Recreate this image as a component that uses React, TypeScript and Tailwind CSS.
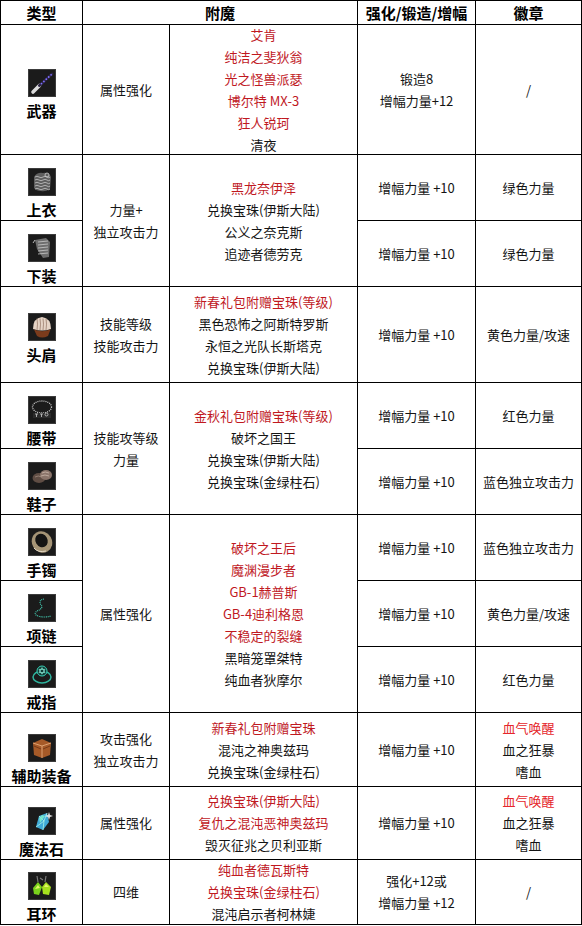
import React from "react";

type Line = { t: string; c?: "red" | "hot" };

const r = (t: string): Line => ({ t, c: "red" });
const k = (t: string): Line => ({ t });

function Frame({ children }: { children: React.ReactNode }) {
  return (
    <svg width="28" height="28" viewBox="0 0 28 28">
      <rect x="0.5" y="0.5" width="27" height="27" fill="#1b1b1b" stroke="#3c3c3c" />
      {children}
    </svg>
  );
}

const icons: Record<string, React.ReactNode> = {
  weapon: (
    <Frame>
      <path d="M5 23 L11.5 16.5" stroke="#dcdcdc" strokeWidth="3.6" strokeLinecap="round" />
      <path d="M11.5 16.5 L24 5" stroke="#2c2444" strokeWidth="3" strokeLinecap="round" />
      {[0, 1, 2, 3, 4].map((i) => (
        <circle key={i} cx={13.5 + i * 2.4} cy={14.6 - i * 2.2} r="0.9" fill="#7d70ff" />
      ))}
    </Frame>
  ),
  top: (
    <Frame>
      <path d="M6 9 Q9 4 15 5 Q21 4 23 9 L22 21 Q17 24 13 23 Q8 23 6 20 Z" fill="#5e5e5e" />
      {[9, 12, 15, 18, 21].map((y) => (
        <path key={y} d={`M7 ${y} q2 -1.5 4 0 t4 0 t4 0 t3 0`} stroke="#c4c4c4" strokeWidth="0.8" fill="none" />
      ))}
      <circle cx="19" cy="7" r="2" fill="none" stroke="#cfcfcf" strokeWidth="0.8" />
    </Frame>
  ),
  bottom: (
    <Frame>
      <path d="M7 6 L18 4 L22 8 L21 23 L15 24 L9 15 Z" fill="#6e6e6e" />
      {[8, 11, 14, 17, 20].map((y) => (
        <path key={y} d={`M10 ${y} L20 ${y - 1}`} stroke="#c9c9c9" strokeWidth="0.8" />
      ))}
      <path d="M7 6 L5 9" stroke="#bbbbbb" strokeWidth="1" />
    </Frame>
  ),
  shoulder: (
    <Frame>
      <path d="M5 16 Q5 5 14 4 Q23 5 23 16 Q14 19 5 16 Z" fill="#e6d4c6" />
      {[9, 12, 15, 18].map((x) => (
        <path key={x} d={`M${x} 5.5 Q${x + 1} 11 ${x} 17`} stroke="#9b7c6c" strokeWidth="0.8" fill="none" />
      ))}
      <path d="M6 16.5 Q14 20 22.5 16.5 L20 23 Q14 26 9 23 Z" fill="#7b3b1c" />
    </Frame>
  ),
  belt: (
    <Frame>
      <ellipse cx="14" cy="11" rx="9.5" ry="6" fill="none" stroke="#c8c8c8" strokeWidth="1.3" strokeDasharray="1 1" />
      <rect x="5" y="17" width="18" height="5" fill="#2b2b2b" />
      <path d="M7 18 h3 M8.5 18 v3 M12 18 h3 M13.5 18 v3 M17 18.5 a1.5 1.5 0 1 0 3 0 a1.5 1.5 0 1 0 -3 0" stroke="#bdbdbd" strokeWidth="0.9" fill="none" />
    </Frame>
  ),
  shoes: (
    <Frame>
      <ellipse cx="11" cy="16" rx="6.5" ry="5" fill="#5f4d44" />
      <ellipse cx="18" cy="13" rx="6" ry="5" fill="#8a746a" />
      <path d="M14 11 q3 -2 7 0 M13 14 q4 -2 8 0" stroke="#c9b6aa" strokeWidth="0.8" fill="none" />
      <path d="M7 15 q3 -2 7 0" stroke="#a08a7e" strokeWidth="0.8" fill="none" />
    </Frame>
  ),
  bracelet: (
    <Frame>
      <ellipse cx="14" cy="14" rx="10" ry="11" fill="#a59476" transform="rotate(-30 14 14)" />
      <ellipse cx="13.5" cy="12.5" rx="6" ry="7" fill="#141414" transform="rotate(-30 13.5 12.5)" />
      <path d="M6 20 Q10 25 18 23" stroke="#e2d8c4" strokeWidth="1" fill="none" />
    </Frame>
  ),
  necklace: (
    <Frame>
      <path d="M16 5 Q10 6 13 11 Q16 14 9 17 Q5 20 10 22 Q16 24 23 22" stroke="#42c7ae" strokeWidth="1.2" strokeDasharray="1 0.8" fill="none" />
    </Frame>
  ),
  ring: (
    <Frame>
      <ellipse cx="14" cy="17" rx="9" ry="6" fill="none" stroke="#2fb59f" strokeWidth="1.5" />
      <circle cx="14" cy="11" r="5" fill="#0f3a34" stroke="#3ad0b6" strokeWidth="1" />
      <path d="M14 7.6 L17 12.6 L11 12.6 Z M14 14.2 L11 9.4 L17 9.4 Z" fill="none" stroke="#8ef0dc" strokeWidth="0.7" />
    </Frame>
  ),
  aux: (
    <Frame>
      <path d="M5 9 L14 5 L23 9 L22 21 L14 24 L6 21 Z" fill="#a65a28" />
      <path d="M5 9 L14 12 L23 9 M14 12 L14 24" stroke="#e2a878" strokeWidth="0.9" fill="none" />
      <path d="M6 12 L13 15 M15 15 L22 12" stroke="#6b3214" strokeWidth="0.8" />
    </Frame>
  ),
  stone: (
    <Frame>
      <path d="M8 20 L11 9 L19 6 L21 15 L15 23 Z" fill="#3fa9d6" />
      <path d="M11 9 L16 14 L19 6 M16 14 L15 23 M16 14 L8 20" stroke="#a9f2e6" strokeWidth="0.8" fill="none" />
      <path d="M11 11 L14 8 L17 9 L12 16 Z" fill="#7ff0c8" opacity="0.8" />
      <path d="M21 5 L22 8 L25 9 L22 10 L21 13 L20 10 L17 9 L20 8 Z" fill="#ffffff" opacity="0.85" />
    </Frame>
  ),
  earring: (
    <Frame>
      <path d="M9 4 L10 10 M18 4 L17 10 M12 6 L15 8" stroke="#7a7a7a" strokeWidth="1.2" />
      <path d="M5 16 L10 10 L14 15 L11 23 L6 22 Z" fill="#7ad21c" />
      <path d="M14 15 L18 10 L23 15 L21 23 L15 22 Z" fill="#a6e01e" />
      <path d="M7 17 L10 13 L12 16 Z M16 15 L18 12 L21 15 Z" fill="#e4f56a" />
    </Frame>
  ),
};

const base = "border-r border-b border-black flex flex-col items-center text-center";

function Head({ children, className = "" }: { children: React.ReactNode; className?: string }) {
  return (
    <div className={`${base} justify-center text-[15px] leading-[20px] font-bold text-black ${className}`}>
      {children}
    </div>
  );
}

function Slot({ name, icon, pb = "pb-[1px]" }: { name: string; icon: string; pb?: string }) {
  return (
    <div className={`${base} justify-end ${pb}`}>
      <div className="h-[28px] w-[28px]">{icons[icon]}</div>
      <div className="mt-[5px] text-[15px] leading-[18px] font-bold text-black whitespace-nowrap">{name}</div>
    </div>
  );
}

function Text({ lines, className = "" }: { lines: Line[]; className?: string }) {
  return (
    <div className={`${base} justify-center text-[13px] leading-[22px] ${className}`}>
      {lines.map((l, i) => (
        <div
          key={i}
          className={
            l.c === "red" ? "text-[#c0191f]" : l.c === "hot" ? "text-[#e5262b]" : "text-[#141414]"
          }
        >
          {l.t}
        </div>
      ))}
    </div>
  );
}

const plus10 = [k("增幅力量 +10")];
const blood = [{ t: "血气唤醒", c: "hot" as const }, k("血之狂暴"), k("嗜血")];

export default function App() {
  return (
    <div className="w-[582px] bg-white font-['Noto_Sans_CJK_SC','Liberation_Sans',sans-serif]">
      <div className="grid grid-cols-[82px_87px_188px_118px_106px] grid-rows-[24px_130px_66px_66px_96px_66px_66px_66px_66px_66px_74px_73px_65px] border-l border-t border-black">
        {/* header */}
        <Head>类型</Head>
        <Head className="col-span-2">附魔</Head>
        <Head>强化/锻造/增幅</Head>
        <Head>徽章</Head>

        {/* 武器 */}
        <Slot name="武器" icon="weapon" pb="pb-[34px]" />
        <Text lines={[k("属性强化")]} />
        <Text
          lines={[r("艾肯"), r("纯洁之斐狄翁"), r("光之怪兽派瑟"), r("博尔特 MX-3"), r("狂人锐珂"), k("清夜")]}
        />
        <Text lines={[k("锻造8"), k("增幅力量+12")]} className="leading-[21px]" />
        <Text lines={[k("/")]} />

        {/* 上衣 / 下装 */}
        <Slot name="上衣" icon="top" />
        <Text lines={[k("力量+"), k("独立攻击力")]} className="row-span-2" />
        <Text
          lines={[r("黑龙奈伊泽"), k("兑换宝珠(伊斯大陆)"), k("公义之奈克斯"), k("追迹者德劳克")]}
          className="row-span-2"
        />
        <Text lines={plus10} />
        <Text lines={[k("绿色力量")]} />
        <Slot name="下装" icon="bottom" />
        <Text lines={plus10} />
        <Text lines={[k("绿色力量")]} />

        {/* 头肩 */}
        <Slot name="头肩" icon="shoulder" pb="pb-[18px]" />
        <Text lines={[k("技能等级"), k("技能攻击力")]} />
        <Text
          lines={[r("新春礼包附赠宝珠(等级)"), k("黑色恐怖之阿斯特罗斯"), k("永恒之光队长斯塔克"), k("兑换宝珠(伊斯大陆)")]}
        />
        <Text lines={plus10} />
        <Text lines={[k("黄色力量/攻速")]} />

        {/* 腰带 / 鞋子 */}
        <Slot name="腰带" icon="belt" />
        <Text lines={[k("技能攻等级"), k("力量")]} className="row-span-2" />
        <Text
          lines={[r("金秋礼包附赠宝珠(等级)"), k("破坏之国王"), k("兑换宝珠(伊斯大陆)"), k("兑换宝珠(金绿柱石)")]}
          className="row-span-2"
        />
        <Text lines={plus10} />
        <Text lines={[k("红色力量")]} />
        <Slot name="鞋子" icon="shoes" />
        <Text lines={plus10} />
        <Text lines={[k("蓝色独立攻击力")]} />

        {/* 手镯 / 项链 / 戒指 */}
        <Slot name="手镯" icon="bracelet" />
        <Text lines={[k("属性强化")]} className="row-span-3" />
        <Text
          lines={[
            r("破坏之王后"),
            r("魔渊漫步者"),
            r("GB-1赫普斯"),
            r("GB-4迪利格恩"),
            r("不稳定的裂缝"),
            k("黑暗笼罩桀特"),
            k("纯血者狄摩尔"),
          ]}
          className="row-span-3"
        />
        <Text lines={plus10} />
        <Text lines={[k("蓝色独立攻击力")]} />
        <Slot name="项链" icon="necklace" />
        <Text lines={plus10} />
        <Text lines={[k("黄色力量/攻速")]} />
        <Slot name="戒指" icon="ring" />
        <Text lines={plus10} />
        <Text lines={[k("红色力量")]} />

        {/* 辅助装备 */}
        <Slot name="辅助装备" icon="aux" />
        <Text lines={[k("攻击强化"), k("独立攻击力")]} />
        <Text lines={[r("新春礼包附赠宝珠"), k("混沌之神奥兹玛"), k("兑换宝珠(金绿柱石)")]} />
        <Text lines={plus10} />
        <Text lines={blood} />

        {/* 魔法石 */}
        <Slot name="魔法石" icon="stone" />
        <Text lines={[k("属性强化")]} />
        <Text lines={[r("兑换宝珠(伊斯大陆)"), r("复仇之混沌恶神奥兹玛"), k("毁灭征兆之贝利亚斯")]} />
        <Text lines={plus10} />
        <Text lines={blood} />

        {/* 耳环 */}
        <Slot name="耳环" icon="earring" />
        <Text lines={[k("四维")]} />
        <Text lines={[r("纯血者德瓦斯特"), r("兑换宝珠(金绿柱石)"), k("混沌启示者柯林婕")]} />
        <Text lines={[k("强化+12或"), k("增幅力量 +12")]} className="leading-[21px]" />
        <Text lines={[k("/")]} />
      </div>
    </div>
  );
}
